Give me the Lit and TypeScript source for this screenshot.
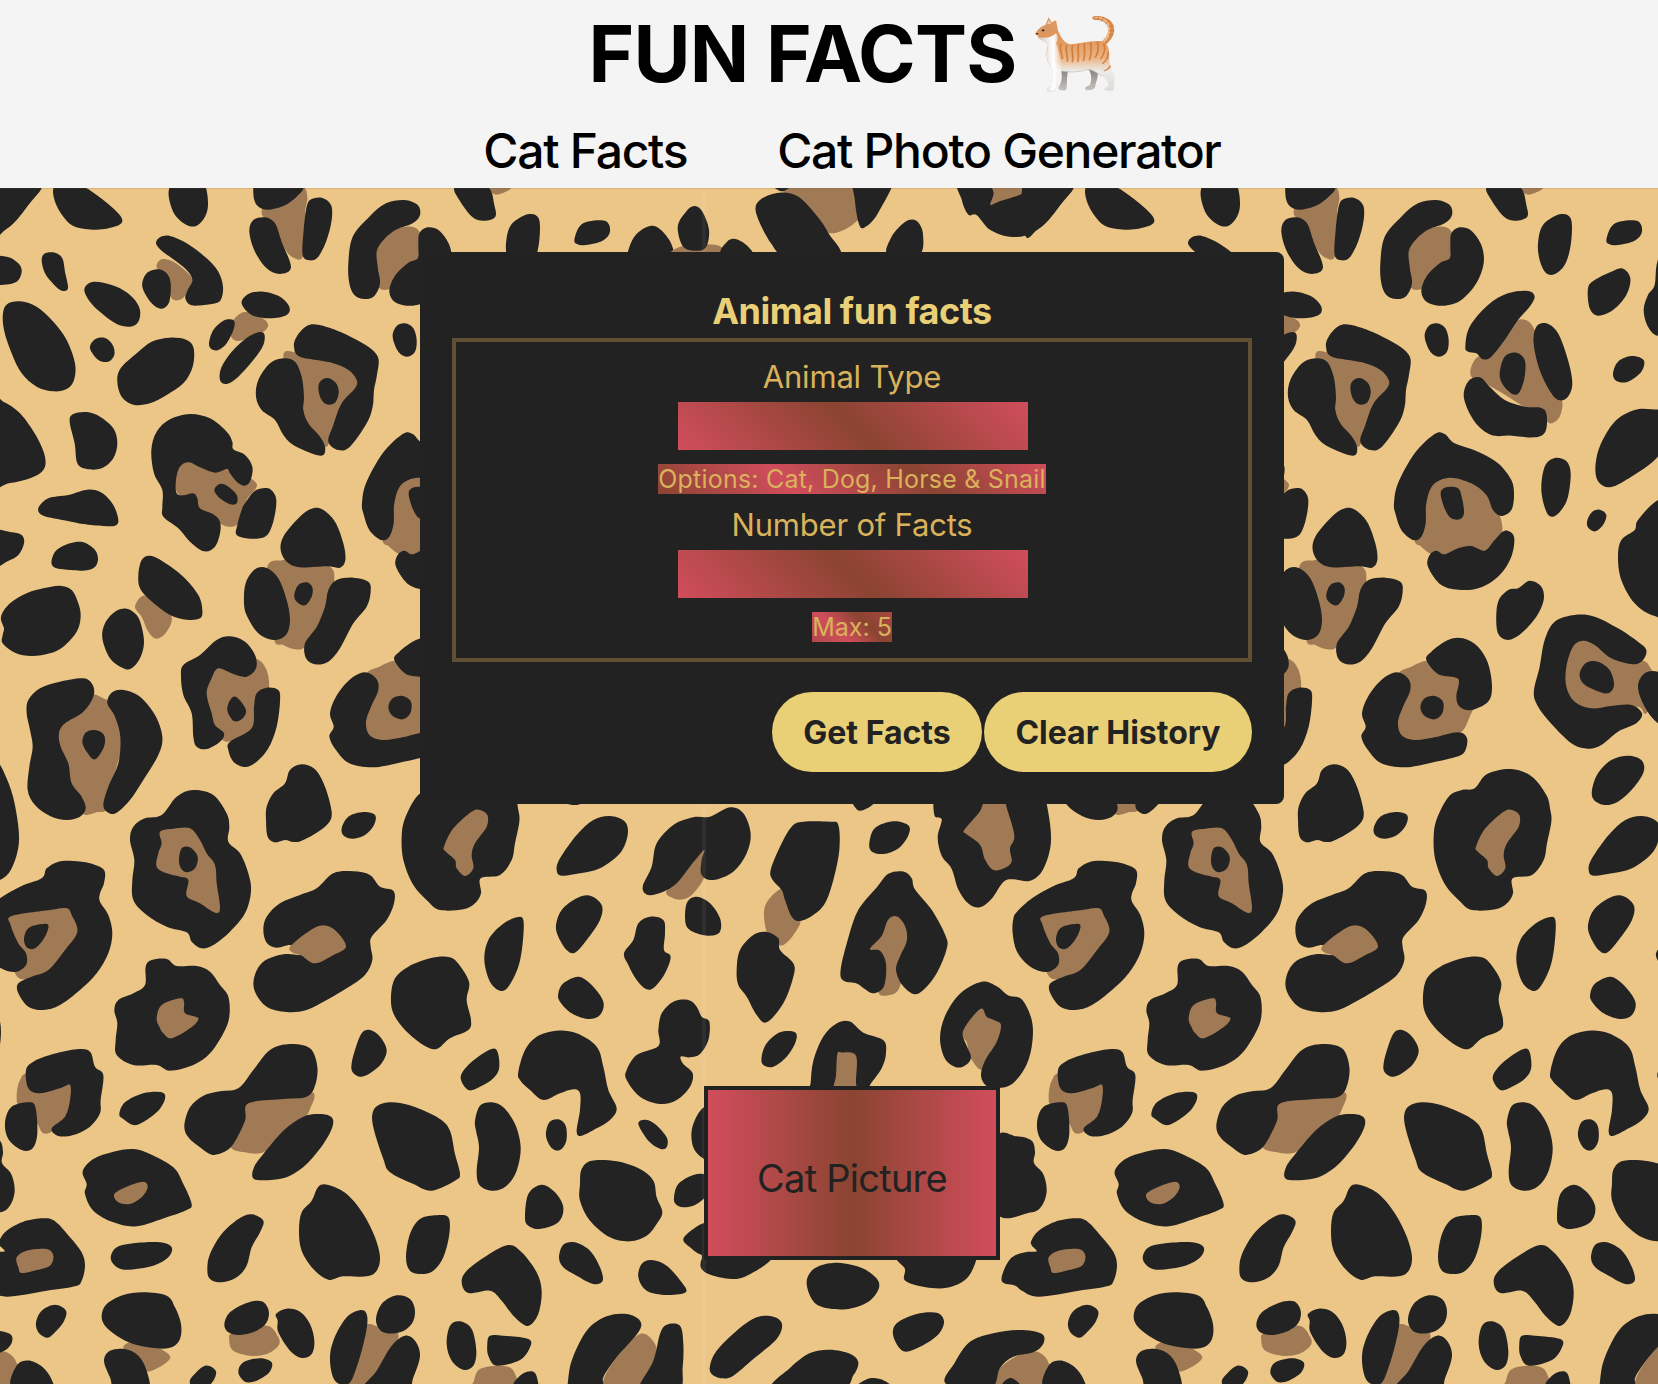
import { LitElement, html, svg, css } from "lit";
import { customElement, property } from "lit/decorators.js";

/** A group of spots drawn in its own unit grid. Each line is "tone x,y x,y ..." */
interface Patch {
  x: number;
  y: number;
  sx: number;
  sy: number;
  spots: string;
}

const T = 1 / 3;
const REPEAT = 1032;

const PATCHES: Patch[] = [
  {
    x: 0, y: 180, sx: T, sy: T,
    spots: `
d -20,0 115,20 95,60 50,120 15,150 -20,165
d 160,24 165,65 190,110 225,140 290,149 350,138 367,120 345,90 290,45 240,15 180,0
d 508,24 508,60 525,105 560,135 590,137 615,110 624,75 618,24 600,0 530,0
b 785,95 840,10 905,15 922,50 915,100 910,225 880,233 850,200 825,140
d 760,40 770,10 840,0 908,20 890,50 850,78 800,89 770,75
d 748,155 760,120 795,112 825,130 845,185 873,262 840,282 800,265 765,215
d 918,90 930,60 965,53 993,75 995,120 980,180 955,230 930,241 908,225 911,150
d -40,235 20,230 55,250 65,275 50,305 10,314 -40,310
d 125,240 135,220 165,218 187,235 195,275 204,325 185,332 160,312 135,280
b 470,262 485,238 520,245 560,275 577,300 565,330 545,357 515,355 500,300
d 468,190 480,172 510,168 560,190 620,235 655,275 669,320 662,360 635,372 575,376 556,355 563,330 577,300 560,270 520,238 485,212
d 427,320 440,280 475,268 500,280 512,310 508,365 485,386 455,370
d 253,330 270,308 310,308 360,325 400,355 420,390 415,425 390,440 350,432 305,400 270,365
d 270,505 285,478 315,474 338,495 343,525 325,545 295,540
d 9,400 22,372 60,364 110,380 160,425 200,480 225,550 222,600 200,627 160,634 110,620 65,580 35,520 12,450
d 352,605 362,565 410,520 455,485 510,473 560,480 581,505 578,560 550,610 500,645 450,670 400,674 365,650
b 740,395 800,425 790,455 715,483 690,460 700,420
d 725,370 745,342 790,335 840,350 868,380 860,405 810,415 755,405
d 627,490 640,450 670,422 700,420 702,445 680,490 655,510 635,508
d 660,600 665,560 700,510 750,467 790,458 790,495 760,540 715,590 680,612
b 850,530 900,520 1000,545 1080,600 1050,650 1000,740 980,800 940,770 905,690
d 768,650 775,600 810,550 850,535 885,545 905,590 912,650 910,690 925,730 960,770 975,800 970,825 940,822 880,795 850,765 825,720 785,690
d 882,500 890,470 920,438 955,434 1020,455 1080,485 1120,512 1136,540 1130,590 1122,630 1118,680 1100,730 1050,800 1015,810 985,785 1000,735 1025,670 1065,625 1070,600 1045,570 990,547 900,530
d 955,620 965,600 987,595 1010,612 1016,640 1005,668 980,673 962,655
d 1178,470 1190,438 1215,430 1240,445 1250,480 1245,515 1222,530 1195,515
d -30,655 10,665 60,700 110,770 135,830 130,870 90,895 30,909 -40,909
d 209,725 220,702 260,696 300,710 340,745 352,790 340,835 305,865 260,867 232,850 224,790
d 115,985 145,955 205,945 262,929 305,938 340,975 355,1020 345,1037 310,1038 250,1032 200,1022 130,1007
b 525,900 560,840 640,860 720,880 765,905 768,925 740,960 715,1030 685,1040 660,1030 600,990 540,950
d 454,810 470,755 510,718 570,702 630,715 680,755 697,785 700,808 735,825 757,860 752,900 735,917 710,905 690,880 680,868 645,878 600,862 567,847 540,860 528,900 530,940 550,946 580,940 592,955 600,985 640,1003 660,1025 660,1060 645,1100 612,1114 570,1085 535,1045 490,1010 487,980 487,930 462,880
d 735,970 765,932 805,925 827,950 827,990 815,1040 795,1070 750,1076 710,1065 712,1035 725,990
d 643,930 660,912 685,920 710,945 710,970 690,973 660,955`,
  },
  {
    x: 0, y: 500, sx: T, sy: T,
    spots: `
d -30,97 30,96 65,105 72,130 55,165 20,185 -30,205
d 155,180 170,150 210,130 250,127 285,150 294,180 280,205 245,212 190,208 160,200
d 3,350 30,310 80,280 130,265 180,257 215,270 235,310 242,350 230,395 190,440 150,460 95,468 45,458 8,430 8,405 12,385
b 405,320 430,287 475,310 515,350 500,395 470,416 445,395 425,350
d 415,225 425,180 450,167 490,185 550,230 595,285 607,330 600,355 560,359 510,345 450,300 420,265
d 307,415 315,370 345,335 380,326 410,345 425,380 432,430 420,475 395,505 370,505 330,475
b 800,210 850,180 920,180 990,200 1003,240 985,310 950,380 915,440 885,448 850,435 820,410
d 842,150 850,110 890,60 930,28 965,27 1005,65 1030,130 1036,180 1020,203 980,199 900,202 860,185
d 732,310 737,250 765,208 800,204 835,235 860,300 870,360 858,405 820,420 775,400 742,350
d 975,320 985,270 1010,240 1060,233 1105,245 1112,275 1100,320 1060,370 1020,445 985,485 945,493 918,475 915,430 950,380
d 883,285 895,255 920,247 937,262 935,290 915,316 890,305
b 170,700 220,640 270,585 310,595 345,620 370,720 350,800 325,920 290,937 245,938 205,850 180,760
d 80,640 85,600 120,565 180,545 250,535 278,555 280,590 250,635 195,670 177,700 182,740 205,790 215,850 245,890 257,925 240,950 200,960 150,948 105,915 83,870 88,800 98,740 90,690
d 322,610 335,578 370,570 420,590 465,645 487,710 475,765 430,840 390,900 350,938 325,938 310,915 325,860 355,790 361,710 345,650
d 247,725 258,697 285,690 312,705 312,740 285,778 260,755
b 610,580 650,495 710,470 765,475 795,500 807,545 800,600 760,685 680,725 630,670
d 543,530 550,495 600,465 650,420 690,409 735,425 765,465 768,505 740,530 700,522 655,505 635,535 620,580 635,640 645,675 672,700 660,725 620,747 590,740 580,710 575,640 550,585
d 762,620 770,580 800,563 835,570 840,605 830,680 805,745 770,785 735,801 700,785 685,750 690,725 755,685
d 682,630 692,598 710,592 738,630 725,658 700,662
d 798,960 800,920 820,880 855,850 870,810 905,793 945,808 975,860 995,935 985,970 950,998 905,1022 880,1026 855,1020 825,1027 803,1010`,
  },
  {
    x: 0, y: 800, sx: T, sy: T,
    spots: `
d 1025,85 1045,50 1090,36 1125,45 1122,75 1095,105 1060,116 1032,108
d 390,120 400,80 435,55 485,45 530,-10 580,-30 640,-15 680,40 688,80 685,125 720,160 745,220 753,275 735,340 690,395 640,435 605,445 575,425 560,397 500,380 440,345 400,300 397,240 403,180
b 480,95 520,86 570,85 600,120 620,160 645,195 650,250 660,325 645,338 600,310 560,288 565,240 540,230 500,220 470,200 475,160 485,130
d 537,180 545,145 570,142 593,170 585,205 560,217 543,205
b 25,345 120,325 205,320 245,395 190,480 130,525 65,538 40,500 50,430
d -56,357 -45,335 0,295 60,260 125,235 140,205 175,185 220,183 270,190 312,210 312,250 300,280 300,305 325,345 337,400 325,460 290,520 240,570 180,615 130,630 85,620 55,580 55,550 95,530 145,510 195,450 232,395 215,345 200,325 150,330 35,348 32,375 55,430 78,460 78,495 45,516 -5,500 -45,455 -58,400
d 72,415 85,385 120,373 145,375 135,410 105,445 80,442
d 343,630 355,600 400,580 435,555 437,500 455,480 500,477 530,498 590,498 630,515 660,555 685,590 688,650 670,700 630,760 580,795 510,812 470,795 400,795 350,765 347,720 352,670
b 470,655 485,615 540,595 552,605 555,640 595,655 570,685 515,715 490,700 478,680
d 790,390 800,350 840,310 900,285 950,265 1000,220 1060,214 1110,225 1140,260 1180,272 1182,310 1160,360 1115,410 1112,440 1117,480 1095,525 1040,565 980,600 920,630 860,636 800,620 765,575 763,530 790,485 850,463 900,465 880,450 870,435 830,443 800,428
b 870,440 925,395 970,376 1010,395 1038,440 1000,465 945,490 905,467 880,459
d 1173,590 1185,535 1225,500 1290,475 1340,470 1370,485 1407,545 1400,600 1413,660 1405,690 1350,715 1310,747 1270,735 1215,690 1180,640
d 1055,790 1065,750 1085,700 1110,690 1140,710 1160,750 1145,790 1110,820 1080,830 1057,815
b 50,890 60,840 90,820 200,850 215,880 205,940 190,970 165,990 130,1000 105,960 60,930
d 78,810 100,785 150,765 230,748 270,755 285,800 310,825 302,900 300,940 270,980 220,1005 175,1008 155,985 195,950 210,900 210,855 180,865 120,880 85,865
d 15,967 35,920 90,907 107,925 112,1000 98,1045 65,1050 25,1017`,
  },
  {
    x: 0, y: 1084, sx: T, sy: T,
    spots: `
d 358,90 375,55 430,28 485,25 495,45 470,85 410,123 370,105
b 690,185 715,110 740,45 830,35 937,25 930,75 905,115 850,160 790,205 735,205
d 553,125 570,70 610,35 660,22 715,13 760,-42 810,-102 870,-120 930,-107 952,-52 945,5 920,38 850,45 745,58 735,110 700,180 670,205 635,212 600,190 565,160
d 762,285 762,250 790,210 850,140 910,98 960,90 995,100 997,130 970,180 920,240 870,275 820,287
d 1200,57 1260,75 1320,105 1350,140 1365,210 1380,270 1365,290 1295,320 1240,300 1170,265 1150,225 1120,130 1120,80 1150,58
d 248,262 280,225 340,203 400,195 450,210 520,250 550,300 575,360 560,378 500,400 410,427 340,415 280,380 255,330 260,300
b 343,330 380,308 430,293 443,310 425,340 390,360 355,355
d -2,470 20,440 70,413 130,403 165,412 210,460 245,505 255,545 245,590 225,607 140,620 20,638 -30,620 -50,605 -89,594 -85,560 -60,520 -20,505 14,502 0,485
b 50,520 80,500 140,495 160,515 150,545 110,558 65,567 55,550
d 332,520 350,490 400,478 480,475 515,490 505,520 460,545 380,557 345,545
d 622,555 630,510 665,450 715,405 755,391 790,410 780,445 755,490 740,545 710,580 665,595 630,585
d 897,440 905,385 935,350 955,308 985,303 1040,330 1090,390 1125,460 1140,520 1130,560 1100,577 1030,577 985,587 940,555 905,500
d 1218,520 1230,450 1260,405 1310,394 1345,400 1348,450 1330,520 1300,560 1265,570 1230,560
d 108,715 125,680 165,662 198,680 190,715 160,750 140,761 115,745
b 370,790 430,770 505,810 500,835 450,862 430,850
d 305,695 320,660 370,633 430,625 500,635 525,670 543,720 540,765 515,790 470,793 400,780 350,755 315,725
d 312,830 330,800 375,795 415,815 440,860 443,920 350,920 330,880
b 688,770 700,745 800,725 835,760 835,785 800,810 750,815 700,800
d 673,720 690,685 740,657 785,652 806,680 800,715 770,740 720,753 685,745
d 828,690 860,674 900,683 930,720 943,770 935,810 905,822 870,800 835,745 833,710
d 715,865 730,835 780,823 815,835 808,865 770,890 735,893
d 570,900 575,880 615,845 647,860 640,890 610,920 580,920
b 1045,910 1065,820 1085,740 1105,720 1140,730 1192,745 1185,790 1130,880 1090,930 1050,930
d 990,830 1000,770 1040,700 1085,678 1102,700 1095,760 1070,850 1045,900 1005,890
d 1128,710 1145,660 1190,634 1230,645 1245,680 1235,720 1200,745 1150,745
d 1090,920 1130,860 1175,785 1215,755 1245,770 1260,815 1240,880 1215,930`,
  },
  {
    x: 400, y: 800, sx: T, sy: T,
    spots: `
d 5,110 15,55 50,-10 90,-30 128,-35 165,-78 238,-93 300,-70 343,-15 355,30 358,65 345,130 335,180 300,225 242,235 243,280 225,310 190,328 120,330 85,305 40,255 10,180
b 132,140 160,85 215,35 240,30 262,45 260,80 225,130 215,165 220,205 195,228 170,205 165,180 138,155
d 470,210 480,175 530,105 580,60 630,48 675,65 683,105 660,160 600,205 540,220 485,227
d 253,480 265,420 305,375 350,352 370,360 368,430 355,500 325,560 300,572 270,545
d 468,375 485,330 530,295 570,287 605,315 600,360 560,420 525,458 500,450 475,410
d 475,580 490,550 535,530 575,555 610,605 600,645 565,657 515,640 480,605
d 672,460 700,420 715,370 750,350 790,360 795,400 792,450 812,470 795,520 765,560 740,568 710,540 685,495
b 800,270 870,200 915,145 915,225 880,280 850,298 820,295
d 728,260 755,200 770,130 820,75 880,52 930,50 990,22 1030,40 1052,100 1040,160 1000,215 940,240 905,225 905,180 912,150 870,200 830,250 790,275 745,285
d 860,310 890,290 930,310 960,355 960,395 930,407 890,400 858,375
d 775,690 785,640 820,605 865,600 890,620 905,650 928,665 925,720 900,762 870,772 842,770 850,792 878,820 870,860 830,900 780,912 720,890 680,840 680,810 710,765 775,738
d 355,815 375,750 410,710 470,692 530,700 590,740 610,800 625,870 650,925 630,960 590,985 545,1007 530,995 540,930 540,880 520,868 480,880 430,900 390,870 360,840
d 182,835 200,800 250,760 288,748 298,800 280,835 240,860 205,870
b 1092,350 1105,300 1160,265 1200,350 1190,390 1150,435 1110,420
d 1112,210 1140,140 1175,80 1210,65 1290,65 1315,75 1318,150 1300,240 1275,310 1240,345 1200,363 1175,350 1155,300 1145,270 1118,240
d 1010,510 1020,450 1060,405 1100,396 1135,415 1140,450 1180,490 1180,530 1150,610 1100,667 1070,645 1040,590 1015,555
d 1085,770 1100,730 1140,697 1185,697 1187,725 1160,770 1120,800 1090,795`,
  },
  {
    x: 400, y: 1084, sx: T, sy: T,
    spots: `
d 225,110 240,65 275,55 310,70 345,120 362,190 350,260 320,305 280,320 240,305 230,265 237,190 228,140
d 438,155 448,115 475,106 497,125 499,170 480,198 455,192
d 715,120 735,107 765,120 800,160 800,190 780,194 745,170
d 540,300 545,255 575,230 650,232 720,255 760,290 770,340 787,385 770,420 740,455 690,472 630,460 570,410 540,350
d 877,130 912,70 960,90 960,240 912,225 880,190
d 822,340 835,300 880,273 920,275 930,320 890,360 850,370 827,360
d 850,465 880,435 920,415 960,420 1000,520 912,515 870,490
d 905,525 905,555 940,575 1010,585 1060,565 1110,530 1120,500 930,490
d 375,400 385,330 425,302 465,325 490,370 475,415 420,435 385,425
d 477,520 490,482 525,475 570,500 600,550 608,590 580,600 530,575 490,550
d 715,580 725,540 755,528 800,545 845,595 857,625 800,633 740,620
d 185,595 200,560 260,515 325,483 365,505 410,565 425,620 418,680 400,715 378,725 340,695 305,650 270,620 205,627
d 140,780 150,725 180,712 215,735 229,800 220,845 190,857 155,830
b 222,890 240,855 300,845 340,860 345,920 220,920
d 262,780 270,755 310,755 385,765 390,790 360,828 290,845 265,815
d 340,900 370,868 400,863 412,885 410,920 350,925
b 610,890 650,820 720,750 765,780 765,830 730,900 700,930 620,930
d 503,900 515,830 560,740 620,697 680,690 720,710 715,745 650,820 610,880 605,920 500,920
d 720,900 760,830 780,750 800,722 840,725 850,780 848,850 835,920 720,920
d 930,845 950,800 1010,740 1070,700 1120,698 1146,720 1130,765 1060,825 1000,875 965,883 935,870`,
  },
  {
    x: 800, y: 800, sx: T, sy: 0.3724,
    spots: `
d 208,115 225,75 280,57 325,68 325,95 295,130 250,145 215,138
d 155,-10 175,28 215,15 230,-10
d 403,-30 403,40 425,52 413,100 425,150 455,185 475,240 505,278 540,288 575,265 610,220 640,213 690,217 730,185 753,110 740,10 715,-60 680,-110 600,-140 500,-130 430,-90
b 493,80 540,30 560,-10 610,-10 620,20 643,95 630,130 635,165 615,182 580,188 555,160 540,120 500,92
b 205,400 240,370 270,310 310,320 325,380 300,500 265,524 235,515 250,440
d 122,455 145,370 175,295 230,235 265,198 310,192 335,210 345,240 395,295 437,365 440,400 410,465 370,510 340,521 305,495 288,455 300,420 320,380 318,345 300,318 280,312 262,325 245,365 210,400 240,405 258,440 252,500 220,519 190,505 170,493 130,485
b 480,620 540,555 610,600 590,660 550,725 510,690 500,650
d 420,640 435,580 480,520 545,488 590,500 625,525 665,535 695,590 697,650 680,710 640,760 600,773 560,768 543,740 555,700 590,650 603,605 585,592 560,582 545,560 515,585 488,625 500,660 513,690 500,710 470,718 435,695
d 32,760 40,700 70,635 110,600 150,595 190,625 250,645 258,680 245,720 210,765 190,800 30,800
b 112,682 125,678 168,687 168,760 175,800 100,800 108,740
d 590,910 650,903 695,915 705,945 702,975 730,1005 740,1050 725,1090 690,1108 590,1108
d 20,1300 40,1260 100,1243 180,1255 230,1285 235,1315 200,1350 130,1368 50,1355
d 300,1220 315,1260 315,1290 370,1307 440,1310 500,1285 530,1230 520,1200
d 280,1440 290,1405 350,1380 410,1377 432,1400 415,1435 360,1468 310,1480
d -80,1580 -30,1525 30,1485 90,1476 150,1487 175,1510 160,1545 120,1580
d 175,1575 210,1553 250,1558 275,1580
b 570,1575 620,1510 700,1480 745,1510 735,1580
d 438,1568 465,1510 510,1455 580,1432 660,1423 725,1433 730,1460 700,1483 640,1495 600,1525 570,1580
d 733,1580 745,1520 780,1505 820,1520 850,1555 850,1590
d 605,1575 630,1552 660,1570 650,1590`,
  },
  {
    x: 226, y: 180, sx: T, sy: T,
    spots: `
b 440,230 490,160 540,140 580,155 590,230 520,275 495,325 455,318
d 367,250 380,170 430,110 480,70 535,60 575,75 582,105 560,130 500,155 455,205 455,260 462,310 445,348 415,357 385,345 370,310
d 577,200 580,160 605,142 640,152 670,195 677,250 655,310 610,360 560,377 510,368 490,335 505,290 545,250 575,235
b 785,15 800,40 820,43 855,25 850,0
d 686,20 700,60 740,112 775,122 808,110 805,75 790,25 740,0
d 840,190 855,135 905,103 938,115 940,180 925,245 895,280 865,280 845,240
d 1045,180 1060,140 1090,124 1140,124 1152,155 1130,182 1080,195 1055,193
d 990,325 1010,300 1060,275 1095,266 1117,295 1105,345 1065,390 1020,407 995,385
d 1157,390 1170,345 1190,315 1197,250 1225,170 1281,137 1330,180 1350,250 1340,300 1250,450 1200,467 1170,440
b 640,590 650,540 700,500 745,440 790,418 825,440 850,520 880,600 912,660 905,710 880,730 860,720 750,650 700,620
d 622,500 635,440 690,375 750,340 810,333 830,350 815,380 780,420 740,480 700,530 675,538 655,520 630,515
d 827,490 835,440 865,430 900,460 930,540 943,610 930,650 905,661 880,640 845,570
d 618,655 630,605 665,592 695,620 740,660 800,680 850,684 866,705 862,755 830,772 760,767 700,765 650,725
d 725,580 740,530 775,518 800,540 800,590 785,635 765,643 735,615
d 1065,580 1080,545 1120,528 1157,540 1150,575 1110,605 1075,603
d 1012,870 1025,800 1070,725 1130,690 1180,688 1230,700 1230,780 1190,840 1120,890 1060,921 1025,910
d 850,930 860,860 890,834 925,843 938,880 930,950 910,990 885,1010 865,995
b 470,1075 500,960 540,890 620,895 700,960 733,1040 710,1100 640,1125 560,1127 520,1122 490,1100
d 408,970 420,910 470,820 530,762 560,762 590,790 660,815 720,850 760,900 768,945 760,990 730,1008 705,990 685,945 640,910 575,893 525,915 505,970 503,1030 490,1070 465,1080 430,1050 412,1000
d 548,940 565,922 600,925 612,955 618,1000 605,1018 580,1015 562,990`,
  },
  {
    x: 226, y: 500, sx: T, sy: T,
    spots: `
d 510,200 515,165 535,152 560,163 600,145 640,138 680,152 710,120 740,92 768,110 760,170 725,225 670,262 610,270 550,255
d 1080,170 1090,120 1130,90 1140,60 1200,0 1280,-20 1280,350 1190,348 1130,310 1090,240
d 987,65 1000,38 1025,29 1045,45 1035,75 1012,94 992,85
d 715,340 725,295 755,268 780,265 815,242 850,260 857,300 835,350 790,400 750,420 720,400
b 420,525 460,500 520,483 620,520 650,600 635,650 605,700 530,720 450,730 410,690 430,600
d 312,640 330,590 370,540 415,517 450,535 457,570 435,620 420,665 430,705 470,720 530,712 600,697 627,715 620,755 590,772 520,788 440,802 370,790 330,750 310,710 323,680
d 505,480 520,455 570,420 615,415 660,440 690,490 702,560 690,605 640,630 605,620 595,590 603,545 590,532 540,522
d 487,622 500,595 530,588 555,605 553,640 530,658 500,648
b 910,560 935,450 970,410 1060,460 1150,480 1175,500 1200,560 1165,640 1140,620 1060,635 1000,640 930,600
d 828,570 845,500 860,420 890,365 950,345 1010,350 1080,385 1140,425 1165,450 1155,480 1125,493 1060,475 1010,435 975,422 945,440 925,500 925,560 950,605 1000,625 1060,618 1120,615 1152,640 1135,670 1080,695 1030,735 990,746 940,730 870,660 835,610
d 1140,560 1160,520 1200,515 1250,540 1250,690 1200,670 1160,620
d 965,520 985,488 1020,485 1055,510 1068,555 1050,580 1010,570 975,550
d 1002,870 1020,820 1060,780 1110,767 1150,780 1157,815 1125,865 1080,905 1040,915 1008,900`,
  },
  {
    x: 420, y: 180, sx: 0.5484, sy: T,
    spots: `
b 460,225 480,198 540,195 555,225
d 470,140 485,95 500,78 515,95 527,150 522,200 505,212 480,200
d 550,220 560,185 575,177 595,195 605,225
b 665,40 670,-10 800,-10 805,105 750,160 710,100
d 613,100 620,60 655,38 690,50 725,110 745,160 765,230 670,230 640,190
d 635,0 660,34 685,0
d 793,-20 793,60 800,130 810,143 835,100 865,-20
d 985,-10 988,60 1000,104 1015,105 1040,150 1080,171 1120,155 1160,90 1195,-10 1090,-40
b 1043,-10 1046,40 1040,74 1055,65 1105,35 1120,-10
d 853,225 860,170 885,125 905,122 917,160 910,225`,
  },
];

/** Closed Catmull-Rom curve through the given points. */
function blob(points: number[][]): string {
  const n = points.length;
  const at = (i: number) => points[(i + n) % n];
  let d = `M${at(0)[0]} ${at(0)[1]}`;
  for (let i = 0; i < n; i++) {
    const [a, b, c, e] = [at(i - 1), at(i), at(i + 1), at(i + 2)];
    d += `C${(b[0] + (c[0] - a[0]) / 6).toFixed(1)} ${(b[1] + (c[1] - a[1]) / 6).toFixed(1)} ${(c[0] - (e[0] - b[0]) / 6).toFixed(1)} ${(c[1] - (e[1] - b[1]) / 6).toFixed(1)} ${c[0]} ${c[1]}`;
  }
  return d + "Z";
}

@customElement("leopard-print")
class LeopardPrint extends LitElement {
  static styles = css`
    :host { display: block; }
    .print { display: block; background: #ebc687; }
    .d { fill: #232323; }
    .b { fill: #a07a54; }
    .seam { fill: #fff; opacity: 0.06; }
    .edge { fill: #6b5a3a; opacity: 0.15; }
  `;

  render() {
    return html`<svg class="print" width="1658" height="1384" viewBox="0 0 1658 1384" aria-hidden="true">
      <defs>
        <g id="tile">
          ${PATCHES.map((p) => svg`<g transform="translate(${p.x} ${p.y}) scale(${p.sx} ${p.sy})">
            ${p.spots.trim().split("\n").map((line) => {
              const [tone, ...pts] = line.trim().split(" ");
              return svg`<path class=${tone} d=${blob(pts.map((q) => q.split(",").map(Number)))}></path>`;
            })}
          </g>`)}
        </g>
      </defs>
      ${[-REPEAT, 0, REPEAT].map((x) => svg`<use href="#tile" x=${x}></use>`)}
      <rect class="seam" x="702" y="188" width="4" height="1196"></rect>
      <rect class="edge" x="0" y="188" width="1658" height="1"></rect>
    </svg>`;
  }
}

@customElement("tabby-cat")
class TabbyCat extends LitElement {
  static styles = css`
    :host { display: block; width: 82px; height: 80px; }
    svg { display: block; }
  `;

  render() {
    return html`<svg width="82" height="80" viewBox="0 0 82 80" role="img" aria-label="cat">
      <defs>
        <linearGradient id="coat" x1="0" y1="0" x2="0" y2="1">
          <stop offset="0" stop-color="#d99a68"></stop>
          <stop offset="0.3" stop-color="#e0965a"></stop>
          <stop offset="0.55" stop-color="#ecb486"></stop>
          <stop offset="0.72" stop-color="#ecebe8"></stop>
          <stop offset="1" stop-color="#dddad6"></stop>
        </linearGradient>
        <linearGradient id="shade" x1="0" y1="0" x2="0" y2="1">
          <stop offset="0" stop-color="#85827e"></stop>
          <stop offset="1" stop-color="#c6c3bf"></stop>
        </linearGradient>
        <linearGradient id="bib" x1="0" y1="0" x2="1" y2="0">
          <stop offset="0" stop-color="#cfccc8"></stop>
          <stop offset="0.6" stop-color="#ffffff"></stop>
          <stop offset="1" stop-color="#ffffff" stop-opacity="0"></stop>
        </linearGradient>
      </defs>
      <g transform="translate(-572 -14) scale(.4975 .3333)">
        <path fill="none" stroke="#d98c50" stroke-width="12" stroke-linecap="round" d="M1273 54C1292 52 1306 68 1305 92C1304 112 1296 124 1284 136"></path>
        <path fill="none" stroke="#efc096" stroke-width="4" stroke-linecap="round" d="M1274 52C1290 52 1301 68 1301 92C1300 108 1296 116 1290 124"></path>
        <path fill="none" stroke="#c97839" stroke-width="2" d="M1280 49L1278 60M1290 51L1285 65M1300 62L1293 72M1308 76L1299 80M1311 92L1300 92M1307 108L1299 102"></path>
        <path fill="url(#shade)" d="M1203 205C1208 230 1205 250 1199 262C1198 270 1204 273 1213 271C1218 266 1214 245 1218 212Z"></path>
        <path fill="url(#shade)" d="M1258 205C1268 225 1265 245 1262 256C1252 260 1249 268 1256 271C1264 272 1272 268 1273 258C1275 240 1281 230 1276 208Z"></path>
        <path fill="url(#coat)" d="M1173 74L1179 52L1186 68C1191 58 1195 60 1195 68L1198 92C1203 106 1207 126 1222 133C1242 130 1262 121 1284 123C1299 128 1302 148 1301 176C1299 194 1310 214 1312 232C1312 248 1310 258 1311 268C1309 274 1297 274 1292 270C1290 264 1298 262 1299 256C1300 242 1292 234 1284 226C1276 218 1266 208 1258 208C1244 214 1224 218 1204 213C1201 228 1196 250 1194 268C1193 276 1178 277 1175 271C1174 264 1184 262 1185 256C1188 240 1190 228 1187 208C1176 192 1173 168 1176 146C1178 136 1175 128 1172 123C1164 121 1158 116 1158 108L1153 102C1155 88 1164 80 1173 74Z"></path>
        <path fill="url(#bib)" d="M1160 112C1170 114 1182 116 1194 100C1199 110 1198 120 1194 130C1200 150 1200 176 1208 206C1203 226 1196 250 1193 268C1188 274 1178 274 1178 268C1188 262 1190 228 1188 208C1176 190 1174 166 1177 146C1178 134 1172 124 1160 116Z"></path>
        <path fill="none" stroke="#bdb9b4" stroke-width="2" opacity="0.8" d="M1206 213C1226 219 1244 215 1258 208C1268 210 1278 220 1286 228"></path>
        <path fill="#f1c9b8" d="M1176 72L1180 60L1184 72Z"></path>
        <path fill="none" stroke="#cc7430" stroke-width="3.4" stroke-linecap="round" opacity="0.8" d="M1204 132C1200 150 1206 162 1207 176M1215 136C1212 152 1218 166 1217 184M1227 136C1224 154 1230 166 1227 186M1239 134C1237 152 1241 164 1238 184M1251 130C1250 148 1254 164 1249 182M1264 128C1264 146 1267 160 1261 180M1277 126C1280 142 1280 156 1273 172M1290 132C1294 146 1291 162 1284 176M1299 156C1300 170 1294 184 1288 190M1303 198C1300 206 1296 210 1291 212"></path>
        <ellipse cx="1168" cy="91" rx="2.6" ry="3.6" fill="#3b3422"></ellipse>
        <path fill="#5b3a2e" d="M1152 99L1159 99L1156 106Z"></path>
        <path fill="none" stroke="#c9906a" stroke-width="1.5" d="M1158 108C1162 114 1166 112 1169 108M1175 84L1186 80M1178 94L1190 90"></path>
      </g>
    </svg>`;
  }
}

@customElement("fact-field")
class FactField extends LitElement {
  @property() label = "";
  @property() hint = "";
  @property() tone = "";

  static styles = css`
    :host { display: flex; flex-direction: column; align-items: center; }
    .label { height: 48px; line-height: 48px; font-size: 31px; letter-spacing: -0.2px; color: #d9b25b; margin-bottom: 1px; }
    .input {
      box-sizing: border-box; display: block; width: 350px; height: 48px; border: 0; border-radius: 0; padding: 0 8px;
      margin: 0 0 14px 2px; font: inherit; font-size: 31px; color: #222; outline: none;
      background: linear-gradient(45deg, #d14d5c, #8b4431, #d14d5c);
    }
    .hint { height: 30px; line-height: 30px; font-size: 25px; letter-spacing: 0.2px; white-space: nowrap; color: #d9b25b; }
    .wide { background: linear-gradient(45deg, #8b4431, #d14d5c, #8b4431, #d14d5c); }
    .short { letter-spacing: 0; background: linear-gradient(45deg, #b0484a 0%, #d14d5c 33%, #8b4431 66%, #a8473f 100%); }
  `;

  render() {
    return html`
      <label class="label" for="field">${this.label}</label>
      <input class="input" id="field" type="text" />
      <span class="hint ${this.tone}">${this.hint}</span>
    `;
  }
}

@customElement("app-root")
class AppRoot extends LitElement {
  static styles = css`
    :host {
      display: block; position: relative; width: 1658px; height: 1384px; overflow: hidden;
      font-family: Inter, "Liberation Sans", sans-serif; color: #000;
    }
    .backdrop { position: absolute; inset: 0; z-index: 0; }
    .page { position: relative; z-index: 1; width: 1704px; display: flex; flex-direction: column; align-items: center; }
    .header { width: 100%; height: 188px; background: #f4f4f4; display: flex; flex-direction: column; align-items: center; }
    .brand { display: flex; align-items: center; gap: 17px; height: 107px; }
    .title { margin: 0; font-size: 78px; font-weight: 700; line-height: 107px; letter-spacing: -0.8px; white-space: nowrap; }
    .nav { display: flex; gap: 90px; height: 88px; line-height: 88px; }
    .link { font-size: 48px; font-weight: 450; letter-spacing: -1.3px; color: #000; text-decoration: none; white-space: nowrap; }
    .card {
      box-sizing: border-box; width: 864px; height: 552px; margin-top: 64px; padding: 32px; border-radius: 8px;
      background: #222; display: flex; flex-direction: column;
    }
    .heading {
      margin: 0; height: 54px; line-height: 54px; font-size: 36px; font-weight: 700; letter-spacing: -0.5px;
      text-align: center; color: #e9cf76;
    }
    .fields {
      box-sizing: border-box; height: 324px; border: 4px solid #615033; padding-top: 11px;
      display: flex; flex-direction: column; gap: 7px;
    }
    .actions { display: flex; justify-content: flex-end; gap: 2px; margin-top: 30px; }
    .button {
      height: 80px; border: 0; border-radius: 40px; padding: 1px 0 0; background: #e9cf76; color: #222;
      font: 700 32px/79px Inter, "Liberation Sans", sans-serif; white-space: nowrap;
    }
    .get { width: 210px; }
    .clear { width: 268px; }
    .photo {
      box-sizing: border-box; width: 296px; height: 174px; margin-top: 282px; border: 4px solid #222;
      padding: 10px 0 0; font-family: inherit; font-size: 38px; letter-spacing: -0.75px; color: #222;
      background: linear-gradient(90deg, #d14d5c, #8b4431, #d14d5c);
    }
  `;

  render() {
    return html`
      <leopard-print class="backdrop"></leopard-print>
      <div class="page">
        <header class="header">
          <div class="brand">
            <h1 class="title">FUN FACTS</h1>
            <tabby-cat></tabby-cat>
          </div>
          <nav class="nav">
            <a class="link" href="#facts">Cat Facts</a>
            <a class="link" href="#photos">Cat Photo Generator</a>
          </nav>
        </header>
        <section class="card">
          <h2 class="heading">Animal fun facts</h2>
          <div class="fields">
            <fact-field label="Animal Type" hint="Options: Cat, Dog, Horse &amp; Snail" tone="wide"></fact-field>
            <fact-field label="Number of Facts" hint="Max: 5" tone="short"></fact-field>
          </div>
          <div class="actions">
            <button class="button get">Get Facts</button>
            <button class="button clear">Clear History</button>
          </div>
        </section>
        <button class="photo">Cat Picture</button>
      </div>
    `;
  }
}
